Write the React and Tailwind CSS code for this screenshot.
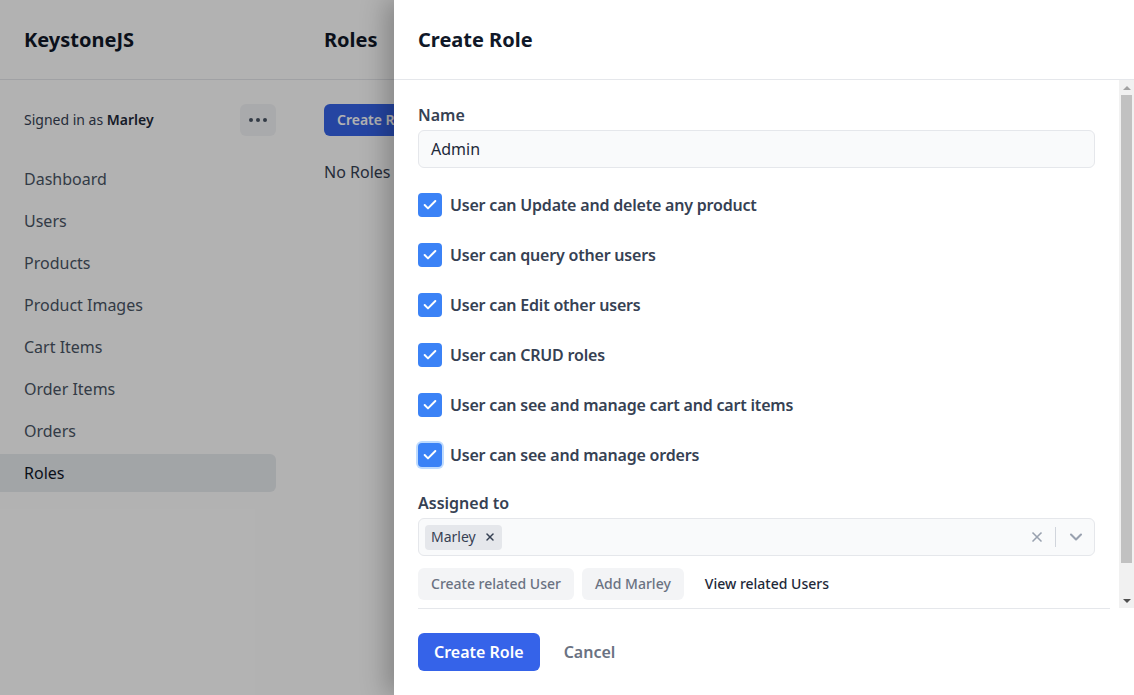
import { Check, X, ChevronDown } from 'lucide-react';

const navItems = ['Dashboard', 'Users', 'Products', 'Product Images', 'Cart Items', 'Order Items', 'Orders', 'Roles'];

const permissions = [
  'User can Update and delete any product',
  'User can query other users',
  'User can Edit other users',
  'User can CRUD roles',
  'User can see and manage cart and cart items',
  'User can see and manage orders',
];

function Sidebar() {
  return (
    <aside className="w-[300px] shrink-0 flex flex-col">
      <div className="h-20 flex items-center px-6 border-b border-gray-200">
        <h1 className="text-xl font-bold text-gray-900">KeystoneJS</h1>
      </div>
      <div className="flex items-center justify-between px-6 pt-6 pb-4">
        <p className="text-sm text-gray-700">
          Signed in as <span className="font-semibold text-gray-800">Marley</span>
        </p>
        <button className="w-9 h-8 rounded-md bg-gray-100 flex items-center justify-center gap-[3px]">
          <span className="w-1 h-1 rounded-full bg-gray-600" />
          <span className="w-1 h-1 rounded-full bg-gray-600" />
          <span className="w-1 h-1 rounded-full bg-gray-600" />
        </button>
      </div>
      <nav className="flex flex-col gap-1 pt-2 pr-6">
        {navItems.map((item) => (
          <a
            key={item}
            className={
              item === 'Roles'
                ? 'h-[38px] flex items-center px-6 rounded-r-md bg-[#e9ecf0] text-gray-900'
                : 'h-[38px] flex items-center px-6 text-gray-600'
            }
          >
            {item}
          </a>
        ))}
      </nav>
    </aside>
  );
}

function Main() {
  return (
    <main className="flex-1 flex flex-col">
      <div className="h-20 flex items-center px-6 border-b border-gray-200">
        <h2 className="text-xl font-bold text-gray-900">Roles</h2>
      </div>
      <div className="px-6 pt-6">
        <button className="h-8 px-[13px] rounded-md bg-[#3563e9] text-white text-sm font-semibold">Create Role</button>
        <p className="mt-6 text-gray-700">No Roles found</p>
      </div>
    </main>
  );
}

function Scrollbar() {
  return (
    <div className="w-[15px] shrink-0 bg-[#f1f1f1] flex flex-col items-center">
      <div className="h-[15px] flex items-center justify-center">
        <span className="w-0 h-0 border-x-[4px] border-x-transparent border-b-[4px] border-b-[#a3a3a3]" />
      </div>
      <div className="w-[11px] flex-1 mb-[30px] bg-[#c1c1c1]" />
      <div className="h-[15px] flex items-center justify-center">
        <span className="w-0 h-0 border-x-[4px] border-x-transparent border-t-[4px] border-t-[#505050]" />
      </div>
    </div>
  );
}

function Drawer() {
  return (
    <div className="absolute top-0 right-0 bottom-0 w-[740px] bg-white shadow-[-8px_0_24px_rgba(0,0,0,0.25)] flex flex-col">
      <div className="h-20 shrink-0 flex items-center px-6 border-b border-gray-200">
        <h2 className="text-xl font-bold text-gray-900">Create Role</h2>
      </div>
      <div className="flex-1 flex min-h-0">
        <div className="flex-1 overflow-hidden px-6 pt-[25px]">
          <label className="block font-semibold text-gray-700 leading-5">Name</label>
          <div className="mt-[5px] h-[38px] flex items-center px-3 rounded-md bg-gray-50 border border-gray-200 text-gray-800">
            Admin
          </div>
          <div className="mt-[25px] flex flex-col gap-[26px]">
            {permissions.map((p, i) => (
              <label key={p} className="flex items-center gap-2">
                <span
                  className={
                    i === permissions.length - 1
                      ? 'w-6 h-6 rounded bg-[#3b82f6] flex items-center justify-center ring-2 ring-[#bfdbfe]'
                      : 'w-6 h-6 rounded bg-[#3b82f6] flex items-center justify-center'
                  }
                >
                  <Check className="w-4 h-4 text-white" strokeWidth={3} />
                </span>
                <span className="font-semibold text-gray-700 tracking-[-0.2px]">{p}</span>
              </label>
            ))}
          </div>
          <label className="block mt-[26px] font-semibold text-gray-700 leading-5">Assigned to</label>
          <div className="mt-[5px] h-[38px] flex items-center pl-[6px] pr-2 rounded-md bg-gray-50 border border-gray-200">
            <span className="h-[25px] flex items-center gap-2 px-[6px] rounded bg-gray-200 text-sm text-gray-700">
              Marley
              <X className="w-3 h-3 text-gray-700" strokeWidth={3} />
            </span>
            <div className="flex-1" />
            <X className="w-4 h-4 text-gray-400" strokeWidth={2.5} />
            <span className="w-px h-5 bg-gray-300 mx-[10px]" />
            <ChevronDown className="w-5 h-5 text-gray-400" strokeWidth={2.5} />
          </div>
          <div className="mt-3 flex items-center gap-2">
            <button className="h-8 px-[13px] rounded-md bg-gray-100 text-sm font-medium text-gray-500">Create related User</button>
            <button className="h-8 px-[13px] rounded-md bg-gray-100 text-sm font-medium text-gray-500">Add Marley</button>
            <button className="h-8 px-[13px] text-sm font-medium text-gray-800">View related Users</button>
          </div>
        </div>
        <Scrollbar />
      </div>
      <div className="shrink-0 mx-6 border-t border-gray-200 pt-6 pb-6 flex items-center gap-2">
        <button className="h-[38px] px-4 rounded-md bg-[#3563e9] text-white font-semibold">Create Role</button>
        <button className="h-[38px] px-4 text-gray-500 font-semibold">Cancel</button>
      </div>
    </div>
  );
}

export default function App() {
  return (
    <div className="relative w-[1134px] h-[695px] overflow-hidden bg-white font-['Noto_Sans',sans-serif]">
      <div className="flex h-full">
        <Sidebar />
        <Main />
      </div>
      <div className="absolute inset-0 bg-black/30" />
      <Drawer />
    </div>
  );
}
